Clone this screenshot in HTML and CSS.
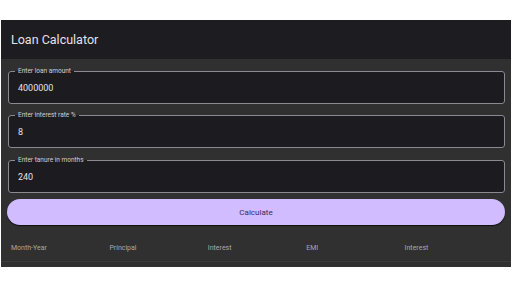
FILE: index.html
```html
<!DOCTYPE html>
<html>
<head>
<meta charset="utf-8">
<link rel="stylesheet" href="styles.css">
</head>
<body>
<div class="app">
  <header class="topbar">Loan Calculator</header>
  <main class="content">
    <fieldset class="field">
      <legend class="field-label">Enter loan amount</legend>
      <div class="field-value">4000000</div>
    </fieldset>
    <fieldset class="field">
      <legend class="field-label">Enter interest rate %</legend>
      <div class="field-value">8</div>
    </fieldset>
    <fieldset class="field">
      <legend class="field-label">Enter tanure in months</legend>
      <div class="field-value">240</div>
    </fieldset>
    <button class="calc-btn">Calculate</button>
    <div class="table-head">
      <span>Month-Year</span>
      <span>Principal</span>
      <span>Interest</span>
      <span>EMI</span>
      <span>Interest</span>
    </div>
  </main>
</div>
</body>
</html>
```

FILE: styles.css
```css
html, body {
  margin: 0;
  padding: 0;
  background: #ffffff;
}
body {
  font-family: Roboto, "Liberation Sans", sans-serif;
}
.app {
  margin: 20px 0 0 1px;
  width: 510px;
  height: 247px;
  background: #303030;
  display: flex;
  flex-direction: column;
}
.topbar {
  height: 39px;
  background: #1d1c21;
  color: #e6e1e5;
  font-size: 12.5px;
  display: flex;
  align-items: center;
  padding-left: 10px;
  box-sizing: border-box;
  flex: none;
}
.content {
  padding: 8px 6px 0 7px;
  display: flex;
  flex-direction: column;
}
.field {
  display: block;
  margin: 0;
  padding: 0 9px;
  border: 1px solid #8c8a90;
  border-radius: 3px;
  background: #1c1b1f;
  height: 37px;
  box-sizing: border-box;
  min-width: 0;
}
.field + .field {
  margin-top: 7px;
}
.field + .field + .field {
  margin-top: 8px;
}
.field-label {
  font-size: 6.5px;
  line-height: 8px;
  color: #cfcbd3;
  padding: 0 3px;
  margin-left: -3px;
}
.field-value {
  font-size: 9px;
  line-height: 12px;
  color: #e6e1e5;
  margin-top: 7px;
}
.calc-btn {
  margin: 6px 0 0 -1px;
  width: 498px;
  height: 26px;
  border: none;
  border-radius: 13px;
  background: #d0bcff;
  color: #3a2a6a;
  font-family: Roboto, "Liberation Sans", sans-serif;
  font-size: 8px;
  box-shadow: 0 1px 1px rgba(0,0,0,0.7);
  padding: 0;
  flex: none;
}
.table-head {
  display: grid;
  grid-template-columns: repeat(5, 1fr);
  height: 27px;
  padding: 9px 8px 0 10px;
  align-items: center;
  border-bottom: 1px solid #3c3c3c;
  margin: 0 -6px 0 -7px;
  font-size: 7px;
  color: #a8a8a8;
}
```
